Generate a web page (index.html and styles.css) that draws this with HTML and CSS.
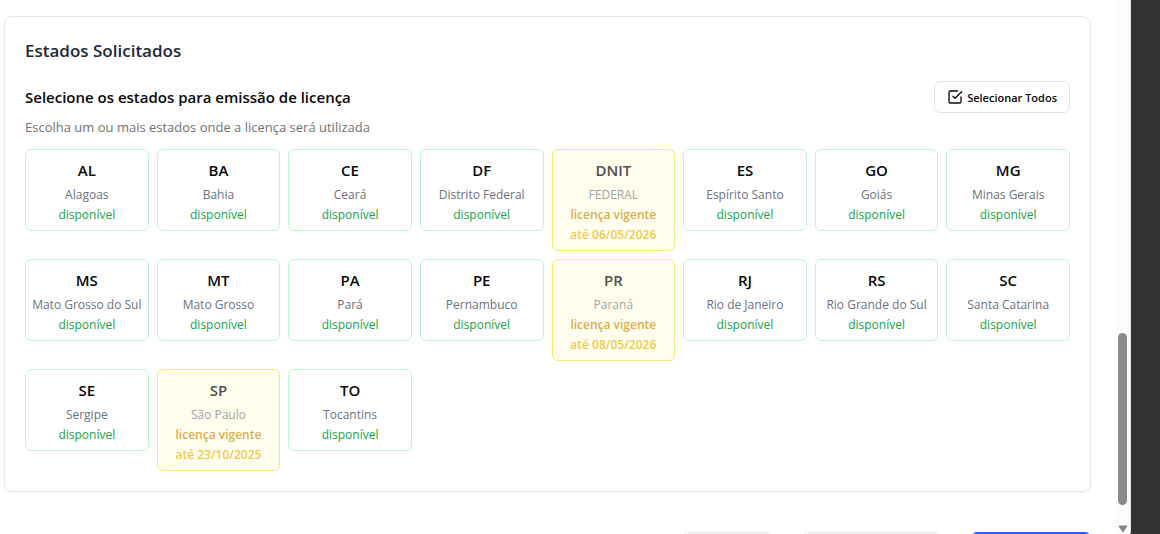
FILE: index.html
```html
<!DOCTYPE html>
<html lang="pt-BR">
<head>
<meta charset="utf-8">
<meta name="viewport" content="width=device-width, initial-scale=1">
<title>Estados Solicitados</title>
<link rel="stylesheet" href="styles.css">
</head>
<body>
<div class="dialog">
  <main class="content">
    <section class="panel">
      <h2 class="panel-title">Estados Solicitados</h2>
      <div class="toolbar">
        <h3 class="toolbar-title">Selecione os estados para emissão de licença</h3>
        <button type="button" class="select-all">
          <svg class="icon" viewBox="0 0 24 24" aria-hidden="true"><path d="m9 11 3 3L22 4"/><path d="M21 12v7a2 2 0 0 1-2 2H5a2 2 0 0 1-2-2V5a2 2 0 0 1 2-2h11"/></svg>
          Selecionar Todos
        </button>
      </div>
      <p class="hint">Escolha um ou mais estados onde a licença será utilizada</p>
      <div class="states">
        <button type="button" class="state"><span class="code">AL</span><span class="name">Alagoas</span><span class="status">disponível</span></button>
        <button type="button" class="state"><span class="code">BA</span><span class="name">Bahia</span><span class="status">disponível</span></button>
        <button type="button" class="state"><span class="code">CE</span><span class="name">Ceará</span><span class="status">disponível</span></button>
        <button type="button" class="state"><span class="code">DF</span><span class="name">Distrito Federal</span><span class="status">disponível</span></button>
        <button type="button" class="state active" disabled><span class="code">DNIT</span><span class="name">FEDERAL</span><span class="status">licença vigente</span><span class="until">até 06/05/2026</span></button>
        <button type="button" class="state"><span class="code">ES</span><span class="name">Espírito Santo</span><span class="status">disponível</span></button>
        <button type="button" class="state"><span class="code">GO</span><span class="name">Goiás</span><span class="status">disponível</span></button>
        <button type="button" class="state"><span class="code">MG</span><span class="name">Minas Gerais</span><span class="status">disponível</span></button>
        <button type="button" class="state"><span class="code">MS</span><span class="name">Mato Grosso do Sul</span><span class="status">disponível</span></button>
        <button type="button" class="state"><span class="code">MT</span><span class="name">Mato Grosso</span><span class="status">disponível</span></button>
        <button type="button" class="state"><span class="code">PA</span><span class="name">Pará</span><span class="status">disponível</span></button>
        <button type="button" class="state"><span class="code">PE</span><span class="name">Pernambuco</span><span class="status">disponível</span></button>
        <button type="button" class="state active" disabled><span class="code">PR</span><span class="name">Paraná</span><span class="status">licença vigente</span><span class="until">até 08/05/2026</span></button>
        <button type="button" class="state"><span class="code">RJ</span><span class="name">Rio de Janeiro</span><span class="status">disponível</span></button>
        <button type="button" class="state"><span class="code">RS</span><span class="name">Rio Grande do Sul</span><span class="status">disponível</span></button>
        <button type="button" class="state"><span class="code">SC</span><span class="name">Santa Catarina</span><span class="status">disponível</span></button>
        <button type="button" class="state"><span class="code">SE</span><span class="name">Sergipe</span><span class="status">disponível</span></button>
        <button type="button" class="state active" disabled><span class="code">SP</span><span class="name">São Paulo</span><span class="status">licença vigente</span><span class="until">até 23/10/2025</span></button>
        <button type="button" class="state"><span class="code">TO</span><span class="name">Tocantins</span><span class="status">disponível</span></button>
      </div>
    </section>
    <div class="actions">
      <button type="button" class="action cancel" aria-label="Cancelar"></button>
      <button type="button" class="action previous" aria-label="Voltar"></button>
      <button type="button" class="action primary" aria-label="Continuar"></button>
    </div>
  </main>
  <div class="scrollbar" aria-hidden="true">
    <div class="thumb"></div>
    <svg class="arrow" viewBox="0 0 10 8"><path d="M1 1h8L5 7z"/></svg>
  </div>
</div>
<div class="backdrop"><div class="backdrop-head"></div></div>
</body>
</html>
```

FILE: styles.css
```css
* { box-sizing: border-box; }

body {
  margin: 0;
  display: flex;
  height: 100vh;
  overflow: hidden;
  background: #323232;
  color: #09090b;
  font-family: "Segoe UI", "Open Sans", "Noto Sans", sans-serif;
}

h2, h3, p { margin: 0; }

button {
  font: inherit;
  color: inherit;
  background: #fff;
  border: 1px solid #e4e4e7;
  border-radius: 6px;
}

.dialog {
  flex: 1;
  display: flex;
  min-width: 0;
  overflow: hidden;
  background: #fff;
  border-right: 1px solid #e4e4e7;
  border-radius: 0 0 2px 0;
}

.content {
  flex: 1;
  min-width: 0;
  padding: 16px 24px 0 4px;
}

.panel {
  padding: 20px;
  border: 1px solid #e5e7eb;
  border-radius: 8px;
  box-shadow: 0 1px 2px rgba(0, 0, 0, 0.05);
}

.panel-title {
  margin-bottom: 16px;
  font-size: 17px;
  line-height: 28px;
  font-weight: 600;
  color: #1f2937;
}

.toolbar {
  display: flex;
  align-items: center;
  justify-content: space-between;
  margin-bottom: 4px;
}

.toolbar-title {
  font-size: 15px;
  line-height: 24px;
  font-weight: 600;
}

.select-all {
  display: flex;
  align-items: center;
  gap: 4px;
  height: 32px;
  padding: 0 12px;
  font-size: 11px;
  font-weight: 600;
}

.icon {
  width: 16px;
  height: 16px;
  fill: none;
  stroke: currentColor;
  stroke-width: 2;
  stroke-linecap: round;
  stroke-linejoin: round;
}

.hint {
  margin-bottom: 12px;
  font-size: 13px;
  line-height: 20px;
  color: #737373;
}

.states {
  display: grid;
  grid-template-columns: repeat(8, minmax(0, 1fr));
  align-items: start;
  gap: 8px;
}

.state {
  display: flex;
  flex-direction: column;
  align-items: center;
  gap: 4px;
  padding: 8px 8px 7px;
  border-color: #bbf7d0;
  font-size: 12px;
  line-height: 16px;
  white-space: nowrap;
}

.code {
  margin-bottom: 1px;
  font-size: 15px;
  line-height: 24px;
  font-weight: 600;
}

.name { color: #6b7280; }
.status { color: #16a34a; }

.active {
  background: #fffeee;
  border-color: #fbe67a;
}

.active .code { color: #505050; }
.active .name { color: #a1a4a8; }
.active .status { color: #d9ae4d; font-weight: 600; }
.active .until { color: #f0ca4d; font-weight: 600; }

.actions {
  display: flex;
  justify-content: flex-end;
  gap: 30px;
  margin-top: 40px;
}

.action { height: 40px; }
.cancel { width: 90px; }
.previous { width: 139px; }
.primary { width: 120px; background: #2563eb; border-color: #2563eb; }

.scrollbar {
  display: flex;
  flex-direction: column;
  align-items: center;
  justify-content: flex-end;
  width: 15px;
  background: #fcfcfc;
}

.thumb {
  width: 9px;
  height: 172px;
  margin-bottom: 20px;
  border-radius: 5px;
  background: #8b8b8b;
}

.arrow {
  width: 10px;
  height: 8px;
  margin-bottom: 1px;
  fill: #858585;
  stroke: #858585;
  stroke-linejoin: round;
}

.backdrop { width: 29px; }

.backdrop-head {
  height: 22px;
  border-bottom: 1px solid #2d2d2d;
}
```
